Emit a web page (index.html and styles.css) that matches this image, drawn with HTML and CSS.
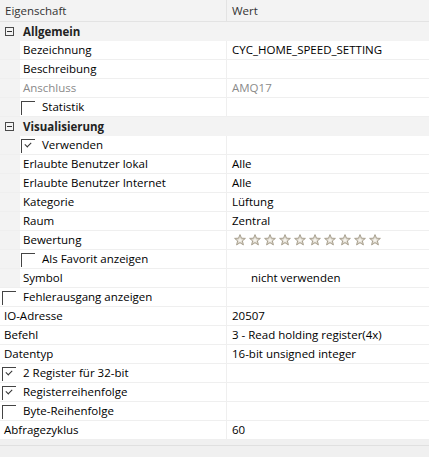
FILE: index.html
```html
<!DOCTYPE html>
<html>
<head>
<meta charset="utf-8">
<link rel="stylesheet" href="styles.css">
</head>
<body>
<div class="grid">
  <div class="head">
    <div class="hname">Eigenschaft</div>
    <div class="hval">Wert</div>
  </div>

  <div class="cat"><span class="minus"></span><span class="ctitle">Allgemein</span></div>
  <div class="row sub"><div class="name">Bezeichnung</div><div class="val">CYC_HOME_SPEED_SETTING</div></div>
  <div class="row sub"><div class="name">Beschreibung</div><div class="val"></div></div>
  <div class="row sub dis"><div class="name">Anschluss</div><div class="val">AMQ17</div></div>
  <div class="row sub"><div class="name"><span class="cb"></span>Statistik</div><div class="val"></div></div>

  <div class="cat"><span class="minus"></span><span class="ctitle">Visualisierung</span></div>
  <div class="row sub"><div class="name"><span class="cb on"></span>Verwenden</div><div class="val"></div></div>
  <div class="row sub"><div class="name">Erlaubte Benutzer lokal</div><div class="val">Alle</div></div>
  <div class="row sub"><div class="name">Erlaubte Benutzer Internet</div><div class="val">Alle</div></div>
  <div class="row sub"><div class="name">Kategorie</div><div class="val">Lüftung</div></div>
  <div class="row sub"><div class="name">Raum</div><div class="val">Zentral</div></div>
  <div class="row sub"><div class="name">Bewertung</div><div class="val stars">
    <svg width="150" height="12" viewBox="0 0 150 12">
      <defs>
        <symbol id="st" viewBox="0 0 12 12">
          <path d="M6 0.6 L7.5 4.2 L11.4 4.4 L8.4 6.9 L9.4 10.9 L6 8.7 L2.6 10.9 L3.6 6.9 L0.6 4.4 L4.5 4.2 Z" fill="#d9d3c6" stroke="#a8a08f" stroke-width="1"/>
          <path d="M6 3.6 L6.8 5.6 L8.6 5.7 L7.2 6.9 L7.6 8.6 L6 7.6 L4.4 8.6 L4.8 6.9 L3.4 5.7 L5.2 5.6 Z" fill="#f6f4ef"/>
        </symbol>
      </defs>
      <use href="#st" x="0" y="0" width="12" height="12"/>
      <use href="#st" x="15" y="0" width="12" height="12"/>
      <use href="#st" x="30" y="0" width="12" height="12"/>
      <use href="#st" x="45" y="0" width="12" height="12"/>
      <use href="#st" x="60" y="0" width="12" height="12"/>
      <use href="#st" x="75" y="0" width="12" height="12"/>
      <use href="#st" x="90" y="0" width="12" height="12"/>
      <use href="#st" x="105" y="0" width="12" height="12"/>
      <use href="#st" x="120" y="0" width="12" height="12"/>
      <use href="#st" x="135" y="0" width="12" height="12"/>
    </svg>
  </div></div>
  <div class="row sub"><div class="name"><span class="cb"></span>Als Favorit anzeigen</div><div class="val"></div></div>
  <div class="row sub"><div class="name">Symbol</div><div class="val indent">nicht verwenden</div></div>

  <div class="row top"><div class="name"><span class="cb"></span>Fehlerausgang anzeigen</div><div class="val"></div></div>
  <div class="row top"><div class="name">IO-Adresse</div><div class="val">20507</div></div>
  <div class="row top"><div class="name">Befehl</div><div class="val">3 - Read holding register(4x)</div></div>
  <div class="row top"><div class="name">Datentyp</div><div class="val">16-bit unsigned integer</div></div>
  <div class="row top"><div class="name"><span class="cb on"></span>2 Register für 32-bit</div><div class="val"></div></div>
  <div class="row top"><div class="name"><span class="cb on"></span>Registerreihenfolge</div><div class="val"></div></div>
  <div class="row top"><div class="name"><span class="cb"></span>Byte-Reihenfolge</div><div class="val"></div></div>
  <div class="row top"><div class="name">Abfragezyklus</div><div class="val">60</div></div>

  <div class="foot"><div class="footpanel"></div></div>
</div>
</body>
</html>
```

FILE: styles.css
```css
html, body {
  margin: 0;
  padding: 0;
  background: #ffffff;
}
body {
  font-family: "Open Sans", "Noto Sans", "Liberation Sans", sans-serif;
  font-size: 11.5px;
  color: #000;
  width: 429px;
  height: 457px;
  overflow: hidden;
}
.grid {
  display: flex;
  flex-direction: column;
  width: 429px;
}
.head {
  display: flex;
  height: 21px;
  background: #f3f3f3;
  border-bottom: 1px solid #e3e3e3;
  color: #333;
}
.hname {
  width: 227px;
  border-right: 1px solid #e3e3e3;
  padding-left: 5px;
  line-height: 21px;
  box-sizing: border-box;
}
.hval {
  padding-left: 5px;
  line-height: 21px;
}
.cat {
  display: flex;
  align-items: center;
  height: 18px;
  background: #f3f3f3;
  border-bottom: 1px solid #f3f3f3;
}
.minus {
  width: 9px;
  height: 9px;
  box-sizing: border-box;
  border: 1px solid #4a4a4a;
  margin-left: 5px;
  position: relative;
}
.minus::after {
  content: "";
  position: absolute;
  left: 1px;
  top: 3px;
  width: 5px;
  height: 1px;
  background: #333;
}
.ctitle {
  font-weight: bold;
  margin-left: 9px;
  color: #222;
}
.row {
  display: flex;
  height: 18px;
  border-bottom: 1px solid #efefef;
  line-height: 18px;
}
.row .name {
  width: 227px;
  box-sizing: border-box;
  border-right: 1px solid #efefef;
  display: flex;
  align-items: stretch;
  white-space: nowrap;
}
.row.sub .name {
  border-left: 20px solid #f3f3f3;
  padding-left: 3px;
}
.row.sub {
  border-bottom-color: #efefef;
}
.row.top .name {
  padding-left: 4px;
}
.row .val {
  padding-left: 5px;
  white-space: nowrap;
}
.row .val.indent {
  padding-left: 24px;
}
.row.dis {
  color: #8a8a8a;
}
.cb {
  width: 14px;
  height: 14px;
  margin-top: 3px;
  margin-left: -2px;
  margin-right: 7px;
  box-sizing: border-box;
  border-top: 1px solid #444;
  border-left: 1px solid #444;
  position: relative;
  flex: none;
}
.row.top .cb {
  margin-left: -2px;
}
.cb.on::after {
  content: "";
  position: absolute;
  left: 3px;
  top: 2px;
  width: 5px;
  height: 3px;
  border-left: 1px solid #333;
  border-bottom: 1px solid #333;
  transform: rotate(-45deg);
}
.stars {
  display: flex;
  align-items: center;
  padding-left: 7px !important;
}
.stars svg {
  display: block;
}
.foot {
  height: 18px;
  background: #f0f0f0;
  padding-top: 5px;
}
.footpanel {
  height: 100%;
  border-top: 1px solid #e0e0e0;
  background: #f0f0f0;
}
```
